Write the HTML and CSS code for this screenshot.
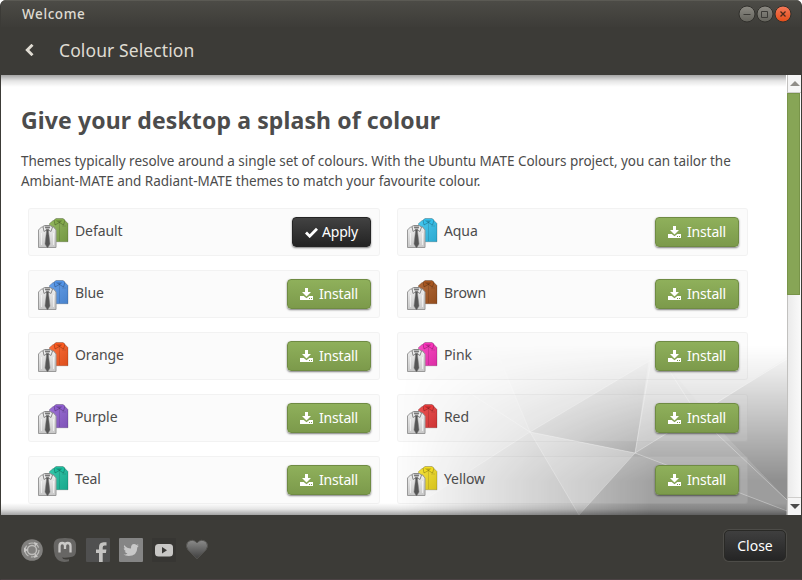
FILE: index.html
```
<!DOCTYPE html>
<html lang="en">
<head>
<meta charset="utf-8">
<title>Welcome</title>
<link rel="stylesheet" href="styles.css">
</head>
<body>
<svg class="defs" width="0" height="0">
  <defs>
    <linearGradient id="grey" x1="0" y1="0" x2="0" y2="1"><stop offset="0" stop-color="#eee"/><stop offset="1" stop-color="#c8c8c8"/></linearGradient>
    <linearGradient id="shade" x1="0" y1="0" x2="1" y2="1"><stop offset="0" stop-color="#fff" stop-opacity=".12"/><stop offset="1" stop-color="#000" stop-opacity=".12"/></linearGradient>
    <symbol id="shirts" viewBox="0 0 32 32">
      <path d="M12.500 5.500 16 2.500h12l3 3v18.300H17V9h-4.500z" fill="currentColor"/>
      <path d="M12.500 5.500 16 2.500h12l3 3v18.300H17V9h-4.500z" fill="url(#shade)" stroke="#000" stroke-opacity=".18"/>
      <path d="m17 2 2-1.500h7L28 2l-1.500 5-4-2.500L18 7z" fill="currentColor" stroke="#000" stroke-opacity=".24"/>
      <path d="M18.500 2.500h7L22.500 5z" fill="#000" fill-opacity=".25"/>
      <path d="M22.500 5v18M25 8h4" stroke="#000" stroke-opacity=".12"/>
      <path d="m1.500 12 3-3h12l2.500 3v17.500H1.500z" fill="url(#grey)" stroke="#999"/>
      <path d="m6 8.500 1.500-1h6L15.500 9 14 13.500l-3.500-2L7 13.500z" fill="#eee" stroke="#888"/>
      <path d="M7.500 8.500h6l-1 2h-4z" fill="#777"/>
      <path d="m9 11.500h3l-.5 2 1.500 12.500-2.500 4L8 26l1.500-12.500z" fill="#555" stroke="#777" stroke-width=".5"/>
      <path d="M4.500 15v12M16.500 15v12" stroke="#fff" stroke-opacity=".6"/>
    </symbol>
    <symbol id="download" viewBox="0 0 13 12">
      <path d="M5 0h3v4h3L6.500 8.500 2 4h3zM0 8h3.700l2.800 2.200L9.300 8H13v4H0z" fill="#fff"/>
      <path d="M9 10h1v1H9zM11 10h1v1h-1z" fill="#7c9a4b"/>
    </symbol>
  </defs>
</svg>
<div class="window">
  <header class="titlebar">
    <span class="title">Welcome</span>
    <svg class="controls" width="54" height="18" viewBox="0 0 54 18">
      <defs>
        <linearGradient id="knob" x1="0" y1="0" x2="0" y2="1"><stop offset="0" stop-color="#8d8b84"/><stop offset="1" stop-color="#63625b"/></linearGradient>
        <linearGradient id="knobx" x1="0" y1="0" x2="0" y2="1"><stop offset="0" stop-color="#f4795a"/><stop offset="1" stop-color="#e34d18"/></linearGradient>
      </defs>
      <g stroke="#31302c"><circle cx="9" cy="9" r="8" fill="url(#knob)"/><circle cx="27" cy="9" r="8" fill="url(#knob)"/><circle cx="45" cy="9" r="8" fill="url(#knobx)"/></g>
      <path d="M5.500 9.500h7M23.500 6.500h6v6h-6z" stroke="#3c3b37" fill="none"/>
      <path d="m42.500 6.500 5 5m0-5-5 5" stroke="#4a2a1c" stroke-width="1.300"/>
    </svg>
  </header>
  <nav class="navbar">
    <svg class="back" width="10" height="12" viewBox="0 0 10 12"><path d="M8.500 .8 3.300 6l5.200 5.200" fill="none" stroke="#dfdbd2" stroke-width="2.900"/></svg>
    <h1 class="page-title">Colour Selection</h1>
  </nav>
  <div class="viewport">
    <main class="content">
      <svg class="backdrop" width="386" height="170" viewBox="401 345 386 170">
        <path fill="#a2a2a2" d="M401 345h386v170H401z"/>
        <path fill="#b8b8b8" d="M401 345h93l36 87-129 85z"/>
        <path fill="#a8a8a8" d="m530 432-129 83h178z"/>
        <path fill="#adadad" d="m494 345 36 87 121-72v-15z"/>
        <path fill="#8f8f8f" d="m530 432 121-72-16 93z"/>
        <path fill="#b6b6b6" d="m530 432 105 21-56 62z"/>
        <path fill="#949494" d="m635 453-56 62h208v-4z"/>
        <path fill="#b0b0b0" d="m651 345-16 108 70-42-52-66z"/>
        <path fill="#b8b8b8" d="m650 345 55 66 82-54v-12z"/>
        <path fill="#8f8f8f" d="m703 412 84-53v141z"/>
        <path fill="#9d9d9d" d="m635 453 68-41 84 88v11z"/>
        <path fill="none" stroke="#fff" stroke-opacity=".32" d="m530 432-36-87m36 87-62-40m62 40-129 83m129-83 121-72M530 432l49 83 56-62-105-21m105 21 16-93M635 453l152-94M635 453l152 58M653 345l37 58 28 32 69 65"/>
      </svg>
      <h2 class="headline">Give your desktop a splash of colour</h2>
      <p class="intro">Themes typically resolve around a single set of colours. With the Ubuntu MATE Colours project, you can tailor the<br>Ambiant-MATE and Radiant-MATE themes to match your favourite colour.</p>
      <div class="grid">
        <div class="card green"><svg class="shirts"><use href="#shirts"/></svg><span class="name">Default</span><button class="btn dark"><svg class="check" width="13" height="11" viewBox="0 0 13 11"><path d="m1 5.500 3.700 3.700L12 1.700" fill="none" stroke="#fff" stroke-width="2.800"/></svg>Apply</button></div>
        <div class="card aqua"><svg class="shirts"><use href="#shirts"/></svg><span class="name">Aqua</span><button class="btn"><svg class="dl"><use href="#download"/></svg>Install</button></div>
        <div class="card blue"><svg class="shirts"><use href="#shirts"/></svg><span class="name">Blue</span><button class="btn"><svg class="dl"><use href="#download"/></svg>Install</button></div>
        <div class="card brown"><svg class="shirts"><use href="#shirts"/></svg><span class="name">Brown</span><button class="btn"><svg class="dl"><use href="#download"/></svg>Install</button></div>
        <div class="card orange"><svg class="shirts"><use href="#shirts"/></svg><span class="name">Orange</span><button class="btn"><svg class="dl"><use href="#download"/></svg>Install</button></div>
        <div class="card pink"><svg class="shirts"><use href="#shirts"/></svg><span class="name">Pink</span><button class="btn"><svg class="dl"><use href="#download"/></svg>Install</button></div>
        <div class="card purple"><svg class="shirts"><use href="#shirts"/></svg><span class="name">Purple</span><button class="btn"><svg class="dl"><use href="#download"/></svg>Install</button></div>
        <div class="card red"><svg class="shirts"><use href="#shirts"/></svg><span class="name">Red</span><button class="btn"><svg class="dl"><use href="#download"/></svg>Install</button></div>
        <div class="card teal"><svg class="shirts"><use href="#shirts"/></svg><span class="name">Teal</span><button class="btn"><svg class="dl"><use href="#download"/></svg>Install</button></div>
        <div class="card yellow"><svg class="shirts"><use href="#shirts"/></svg><span class="name">Yellow</span><button class="btn"><svg class="dl"><use href="#download"/></svg>Install</button></div>
      </div>
    </main>
    <div class="scrollbar">
      <div class="step up"><svg width="10" height="5"><path d="M0 5 5 0l5 5z" fill="#8f8d88"/></svg></div>
      <div class="track"><div class="thumb"></div></div>
      <div class="step down"><svg width="10" height="5"><path d="m0 0 5 5 5-5z" fill="#4c4c4c"/></svg></div>
    </div>
  </div>
  <footer class="footer">
    <div class="social">
      <svg width="24" height="24" viewBox="0 0 24 24"><circle cx="12" cy="12" r="10.800" fill="#81807e"/><g fill="none" stroke="#bebdbb"><circle cx="12" cy="12" r="7" stroke-width="1.200" stroke-dasharray="12 2.660"/><circle cx="12" cy="12" r="4.500" stroke-width="1.500"/></g><path d="m4 9.500 4 2.500-4 2.500zM14 4l4 1.500-3 3zM14 20l4-1.500-3-3z" fill="#c8c7c5"/></svg>
      <svg width="24" height="24" viewBox="0 0 24 24"><path d="M6 .5Q12-.5 18 .5q4.500 1 5 6v7q-.5 5-5 5.500-5 1-9 .5 1 3 7 1.700v2Q6 26 2 18 0 10 1 5q1-4 5-4.500z" fill="#676664"/><path d="M6.500 14.500V8q0-3 2.700-3Q12 5 12 8v3-3q0-3 2.700-3 2.800 0 2.800 3v6.500" fill="none" stroke="#cbcac8" stroke-width="2.300"/></svg>
      <svg width="24" height="24" viewBox="0 0 24 24"><rect width="24" height="24" rx="1" fill="#505050"/><path d="M13 24v-9h-3v-3.600h3V9q0-4.500 4.500-4.800h3v3.400h-2q-1.800 0-1.800 1.800v2h3.700l-.5 3.600h-3.200v9z" fill="#c4c3c1"/></svg>
      <svg width="24" height="24" viewBox="0 0 24 24"><rect width="24" height="24" rx="1" fill="#858585"/><path d="M5 7q3 3.500 7 3.500Q11.800 6 15 6q1.500 0 2.500 1l2-.8-1.300 1.900 1.600-.4-1.500 1.700Q18.200 18 9.500 18q-3 0-5-1.400 2.500 0 4-1.200-2.200-.3-2.800-2.100h1.400Q4.800 12.300 4.700 10l1.400.4Q4.300 8.800 5 7z" fill="#c8c8c8"/></svg>
      <svg width="24" height="24" viewBox="0 0 24 24"><rect width="24" height="24" rx="1" fill="#373633"/><rect x="3" y="6" width="18" height="12.500" rx="3.500" fill="#c8c7c5"/><path d="m10 9 5 3.200-5 3.200z" fill="#3a3936"/></svg>
      <svg width="24" height="24" viewBox="0 0 24 24"><defs><linearGradient id="heart" x1="0" y1="0" x2="0" y2="1"><stop offset="0" stop-color="#8b8b8a"/><stop offset="1" stop-color="#3f3f3f"/></linearGradient></defs><path d="M12 20.800 3 12Q0 8 2.500 4.300 7.500 0 12 4.800 16.500 0 21.500 4.300 24 8 21 12z" fill="url(#heart)" stroke="#555451"/></svg>
    </div>
    <button class="close">Close</button>
  </footer>
</div>
</body>
</html>
```

FILE: styles.css
```
* { box-sizing: border-box; }
body { margin: 0; background: #fff; font-family: "Noto Sans", sans-serif; }
.defs { position: absolute; }
.window {
  width: 802px; height: 580px; display: flex; flex-direction: column;
  background: #3c3b37; border: solid #3c3b37; border-width: 0 1px 1px; border-bottom-color: #4b4244;
  border-radius: 6px 6px 0 0; overflow: hidden;
}
.titlebar {
  height: 27px; flex: none; display: flex; justify-content: space-between; align-items: center;
  padding: 0 9px 0 21px; border-top: 1px solid #5b5a54;
  background: linear-gradient(#4c4b46, #3d3c38);
}
.title { font-size: 13.500px; font-weight: 500; line-height: 20px; color: #dfdbd2; letter-spacing: .6px; }
.controls { display: block; }
.navbar { height: 48px; flex: none; display: flex; align-items: center; padding: 0 0 3px 23px; }
.back { margin-right: 25px; }
.page-title { margin: 0; font-size: 17.500px; font-weight: 400; line-height: 24px; color: #dfdbd2; letter-spacing: .1px; }
.viewport { height: 440px; flex: none; display: flex; position: relative; background: #fff; }
.content { position: relative; width: 786px; height: 440px; overflow: hidden; padding: 30px 20px 0; color: #4c4c4c; }
.viewport::before, .viewport::after {
  content: ""; position: absolute; left: 0; right: 15px; z-index: 2; height: 12px; pointer-events: none;
}
.viewport::before { top: 0; background: linear-gradient(rgba(0,0,0,.36), rgba(0,0,0,.1) 50%, transparent); }
.viewport::after { bottom: 0; background: linear-gradient(transparent, rgba(0,0,0,.1) 50%, rgba(0,0,0,.36)); }
.backdrop {
  position: absolute; right: 0; bottom: 0;
  -webkit-mask-image: linear-gradient(to bottom, transparent, #000 80%), linear-gradient(to right, transparent, #000 65%);
  -webkit-mask-composite: source-in;
  mask-image: linear-gradient(to bottom, transparent, #000 80%), linear-gradient(to right, transparent, #000 65%);
  mask-composite: intersect;
}
.headline { position: relative; margin: 0; font-size: 23px; line-height: 30px; font-weight: 700; white-space: nowrap; letter-spacing: .12px; }
.intro { position: relative; margin: 16px 0 0; font-size: 13.500px; line-height: 20px; white-space: nowrap; letter-spacing: -.03px; }
.grid { position: relative; display: grid; grid-template-columns: 352px 351px; column-gap: 17px; row-gap: 14px; padding-left: 7px; margin-top: 17px; }
.card {
  height: 48px; display: flex; align-items: center; padding: 0 8px;
  background: rgba(230,230,230,.17); border: 1px solid rgba(0,0,0,.035); border-radius: 3px;
}
.shirts { width: 32px; height: 32px; flex: none; margin-top: 3px; }
.name { margin: -2px auto 0 6px; font-size: 14px; line-height: 20px; letter-spacing: -.1px; }
.btn, .close {
  display: flex; align-items: center; justify-content: center; padding: 0;
  font: 14px/20px "Noto Sans", sans-serif; color: #fff;
}
.btn {
  width: 84px; height: 30px; gap: 6px; border: 1px solid #6f8b43; border-radius: 4px; letter-spacing: -.2px;
  background: linear-gradient(#8fb05b, #7c9a4b); box-shadow: 0 1px 2px rgba(0,0,0,.5);
}
.dark { width: 79px; gap: 4px; border-color: #242424; background: linear-gradient(#424242, #232323); }
.dl { width: 13px; height: 12px; }
.green { --shirt: #84ac4b; } .aqua { --shirt: #32c0ec; } .blue { --shirt: #5294e8; }
.brown { --shirt: #a85720; } .orange { --shirt: #fb5a20; } .pink { --shirt: #f933bb; }
.purple { --shirt: #8f5ed0; } .red { --shirt: #e93b3b; } .teal { --shirt: #1bbf9f; } .yellow { --shirt: #f2dc20; }
.card .shirts { color: var(--shirt); }
.scrollbar { width: 14px; height: 440px; display: flex; flex-direction: column; background: linear-gradient(to right, #ebebeb, #fafafa); border-left: 1px solid #c2c1bf; }
.step { height: 18px; flex: none; display: flex; align-items: center; justify-content: center; background: #f5f5f5; }
.up { border-bottom: 1px solid #cfcecc; }
.down { border-top: 1px solid #cfcecc; }
.track { flex: 1; }
.thumb { width: 13px; height: 202px; margin-left: -1px; background: #87a556; border: 1px solid #789449; }
.footer { flex: 1; display: flex; justify-content: space-between; padding: 15px 15px 0 19px; }
.social { display: flex; gap: 9px; padding-top: 8px; }
.close { width: 62px; height: 31px; border: 1px solid #292926; border-radius: 5px; background: linear-gradient(#3f3f3f, #252525); box-shadow: 0 0 0 1px #4d4c48; }
```
